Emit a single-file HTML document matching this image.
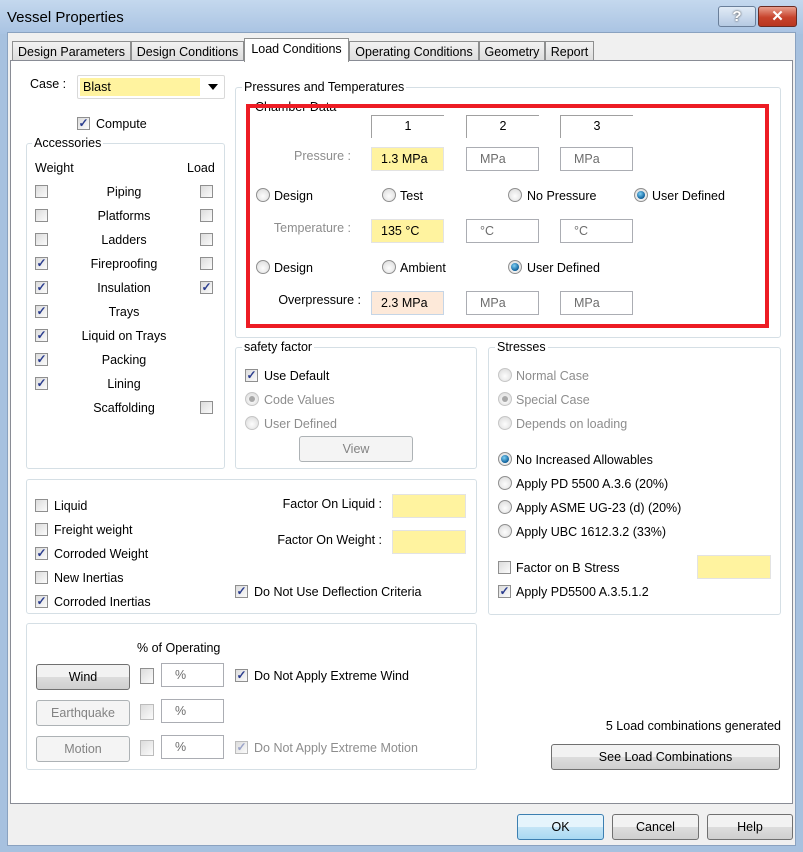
<!DOCTYPE html>
<html><head><meta charset="utf-8">
<style>
*{box-sizing:border-box;margin:0;padding:0}
body{width:803px;height:852px;position:relative;overflow:hidden;font-family:"Liberation Sans",sans-serif;font-size:12.5px;color:#000;background:#a7c1df}
.a{position:absolute;white-space:nowrap}
.title{left:0;top:0;width:803px;height:34px;background:linear-gradient(#c4d8ee,#a9c3e2)}
.gray{left:7px;top:32px;width:789px;height:814px;background:#f0f0f0;border:1px solid #8aa2c0}
.tab{top:41px;height:20px;border:1px solid #8e8f8f;border-bottom:none;background:linear-gradient(#f2f2f2,#dcdcdc);text-align:center;line-height:20px;font-size:12.5px}
.panel{left:10px;top:60px;width:783px;height:744px;background:#fff;border:1px solid #898c95}
.grp{border:1px solid #d5dfe5;border-radius:3px}
.gl{background:#fff;padding:0 2px;}
.cb{width:13px;height:13px;border:1px solid #8f8f8f;background:linear-gradient(135deg,#dcdcdc,#fbfbfb);font-size:12px;line-height:11px;text-align:center;color:#2a3c8e;font-weight:bold}
.cb.d{border-color:#bcbcbc;color:#9aa3c8}
.rb{width:14px;height:14px;border-radius:50%;border:1px solid #8f8f8f;background:radial-gradient(circle at 50% 60%,#fdfdfd,#d8d8d8)}
.rb.on::after{content:"";position:absolute;left:2px;top:2px;width:8px;height:8px;border-radius:50%;background:radial-gradient(circle at 40% 35%,#7fd0f5,#0d5f9a 70%,#083c64)}
.rb.g::after{content:"";position:absolute;left:3px;top:3px;width:6px;height:6px;border-radius:50%;background:#a8a8a8}
.rb.d{border-color:#c6c6c6}
.tb{height:24px;border:1px solid #abadb3;background:#fff;line-height:22px;padding-left:9px;color:#6d6d6d}
.y{background:#fff39f;color:#000}
.btn{border:1px solid #707070;border-radius:3px;background:linear-gradient(#f2f2f2 50%,#dddddd 50%,#cfcfcf);text-align:center;line-height:25px}
.btn.d{border-color:#adb2b5;background:#f4f4f4;color:#838383}
.dis{color:#8d8d8d}
</style></head><body>
<div class="a title"></div>
<div class="a" style="left:7px;top:9px;font-size:15px;">Vessel Properties</div>
<div class="a" style="left:718px;top:6px;width:38px;height:21px;border:1px solid #6a7f9a;border-radius:3px;background:linear-gradient(#e1ebf6,#b5c9e2);text-align:center;font-weight:bold;color:#fff;font-size:15px;line-height:19px;text-shadow:0 0 2px #333">?</div>
<div class="a" style="left:758px;top:6px;width:39px;height:21px;border:1px solid #6b2b22;border-radius:3px;background:linear-gradient(#e9a08f,#c7432c 55%,#b9361f);text-align:center;font-weight:bold;color:#fff;font-size:15px;line-height:19px">✕</div>
<div class="a gray"></div>
<div class="a tab" style="left:12px;width:119px">Design Parameters</div>
<div class="a tab" style="left:131px;width:113px">Design Conditions</div>
<div class="a tab" style="left:349px;width:130px">Operating Conditions</div>
<div class="a tab" style="left:479px;width:66px">Geometry</div>
<div class="a tab" style="left:545px;width:49px">Report</div>
<div class="a panel"></div>
<div class="a tab" style="left:244px;top:38px;width:105px;height:24px;background:#fff;line-height:21px">Load Conditions</div>

<!-- case -->
<div class="a" style="left:30px;top:77px">Case :</div>
<div class="a" style="left:77px;top:75px;width:148px;height:24px;border:1px solid #d9d9d9;border-radius:2px"></div>
<div class="a y" style="left:80px;top:78px;width:120px;height:18px;padding-left:3px;line-height:18px">Blast</div>
<div class="a" style="left:208px;top:84px;width:0;height:0;border-left:5px solid transparent;border-right:5px solid transparent;border-top:6px solid #000"></div>
<div class="a cb" style="left:77px;top:117px">✓</div><div class="a" style="left:96px;top:117px">Compute</div>

<!-- accessories -->
<div class="a grp" style="left:26px;top:143px;width:199px;height:326px"></div>
<div class="a gl" style="left:32px;top:136px">Accessories</div>
<div class="a" style="left:35px;top:161px">Weight</div><div class="a" style="left:187px;top:161px">Load</div>
<div class="a cb" style="left:35px;top:185px"></div><div class="a" style="left:64px;width:120px;text-align:center;top:185px">Piping</div><div class="a cb" style="left:200px;top:185px"></div>
<div class="a cb" style="left:35px;top:209px"></div><div class="a" style="left:64px;width:120px;text-align:center;top:209px">Platforms</div><div class="a cb" style="left:200px;top:209px"></div>
<div class="a cb" style="left:35px;top:233px"></div><div class="a" style="left:64px;width:120px;text-align:center;top:233px">Ladders</div><div class="a cb" style="left:200px;top:233px"></div>
<div class="a cb" style="left:35px;top:257px">✓</div><div class="a" style="left:64px;width:120px;text-align:center;top:257px">Fireproofing</div><div class="a cb" style="left:200px;top:257px"></div>
<div class="a cb" style="left:35px;top:281px">✓</div><div class="a" style="left:64px;width:120px;text-align:center;top:281px">Insulation</div><div class="a cb" style="left:200px;top:281px">✓</div>
<div class="a cb" style="left:35px;top:305px">✓</div><div class="a" style="left:64px;width:120px;text-align:center;top:305px">Trays</div>
<div class="a cb" style="left:35px;top:329px">✓</div><div class="a" style="left:64px;width:120px;text-align:center;top:329px">Liquid on Trays</div>
<div class="a cb" style="left:35px;top:353px">✓</div><div class="a" style="left:64px;width:120px;text-align:center;top:353px">Packing</div>
<div class="a cb" style="left:35px;top:377px">✓</div><div class="a" style="left:64px;width:120px;text-align:center;top:377px">Lining</div>
<div class="a" style="left:64px;width:120px;text-align:center;top:401px">Scaffolding</div><div class="a cb" style="left:200px;top:401px"></div>

<!-- pressures -->
<div class="a grp" style="left:235px;top:87px;width:546px;height:251px"></div>
<div class="a gl" style="left:242px;top:80px">Pressures and Temperatures</div>
<div class="a" style="left:255px;top:100px">Chamber Data</div>
<div class="a" style="left:246px;top:104px;width:523px;height:224px;border:4px solid #ed1c24"></div>
<div class="a" style="left:371px;top:115px;width:73px;height:23px;border-top:1px solid #a0a0a0;border-left:1px solid #a0a0a0;text-align:center;line-height:20px">1</div>
<div class="a" style="left:466px;top:115px;width:73px;height:23px;border-top:1px solid #a0a0a0;border-left:1px solid #a0a0a0;text-align:center;line-height:20px">2</div>
<div class="a" style="left:560px;top:115px;width:73px;height:23px;border-top:1px solid #a0a0a0;border-left:1px solid #a0a0a0;text-align:center;line-height:20px">3</div>
<div class="a dis" style="left:251px;width:100px;text-align:right;top:149px">Pressure :</div>
<div class="a tb y" style="left:371px;top:147px;width:73px;border-color:#e3e3e3">1.3 MPa</div>
<div class="a tb" style="left:466px;top:147px;width:73px;padding-left:13px">MPa</div>
<div class="a tb" style="left:560px;top:147px;width:73px;padding-left:13px">MPa</div>
<div class="a rb" style="left:256px;top:188px"></div><div class="a" style="left:274px;top:189px">Design</div>
<div class="a rb" style="left:382px;top:188px"></div><div class="a" style="left:400px;top:189px">Test</div>
<div class="a rb" style="left:508px;top:188px"></div><div class="a" style="left:527px;top:189px">No Pressure</div>
<div class="a rb on" style="left:634px;top:188px"></div><div class="a" style="left:652px;top:189px">User Defined</div>
<div class="a dis" style="left:251px;width:100px;text-align:right;top:221px">Temperature :</div>
<div class="a tb y" style="left:371px;top:219px;width:73px;border-color:#e3e3e3">135 °C</div>
<div class="a tb" style="left:466px;top:219px;width:73px;padding-left:13px">°C</div>
<div class="a tb" style="left:560px;top:219px;width:73px;padding-left:13px">°C</div>
<div class="a rb" style="left:256px;top:260px"></div><div class="a" style="left:274px;top:261px">Design</div>
<div class="a rb" style="left:382px;top:260px"></div><div class="a" style="left:400px;top:261px">Ambient</div>
<div class="a rb on" style="left:508px;top:260px"></div><div class="a" style="left:527px;top:261px">User Defined</div>
<div class="a" style="left:251px;width:110px;text-align:right;top:293px">Overpressure :</div>
<div class="a tb" style="left:371px;top:291px;width:73px;background:#fde9d9;color:#000;border-color:#c5d5e6">2.3 MPa</div>
<div class="a tb" style="left:466px;top:291px;width:73px;padding-left:13px">MPa</div>
<div class="a tb" style="left:560px;top:291px;width:73px;padding-left:13px">MPa</div>

<!-- safety factor -->
<div class="a grp" style="left:235px;top:347px;width:242px;height:122px"></div>
<div class="a gl" style="left:242px;top:340px">safety factor</div>
<div class="a cb" style="left:245px;top:369px">✓</div><div class="a" style="left:264px;top:369px">Use Default</div>
<div class="a rb d g" style="left:245px;top:392px"></div><div class="a dis" style="left:264px;top:393px">Code Values</div>
<div class="a rb d" style="left:245px;top:416px"></div><div class="a dis" style="left:264px;top:417px">User Defined</div>
<div class="a btn d" style="left:299px;top:436px;width:114px;height:26px">View</div>

<!-- stresses -->
<div class="a grp" style="left:488px;top:347px;width:293px;height:268px"></div>
<div class="a gl" style="left:495px;top:340px">Stresses</div>
<div class="a rb d" style="left:498px;top:368px"></div><div class="a dis" style="left:516px;top:369px">Normal Case</div>
<div class="a rb d g" style="left:498px;top:392px"></div><div class="a dis" style="left:516px;top:393px">Special Case</div>
<div class="a rb d" style="left:498px;top:416px"></div><div class="a dis" style="left:516px;top:417px">Depends on loading</div>
<div class="a rb on" style="left:498px;top:452px"></div><div class="a" style="left:516px;top:453px">No Increased Allowables</div>
<div class="a rb" style="left:498px;top:476px"></div><div class="a" style="left:516px;top:477px">Apply PD 5500 A.3.6 (20%)</div>
<div class="a rb" style="left:498px;top:500px"></div><div class="a" style="left:516px;top:501px">Apply ASME UG-23 (d) (20%)</div>
<div class="a rb" style="left:498px;top:524px"></div><div class="a" style="left:516px;top:525px">Apply UBC 1612.3.2 (33%)</div>
<div class="a cb" style="left:498px;top:561px"></div><div class="a" style="left:516px;top:561px">Factor on B Stress</div>
<div class="a tb y" style="left:697px;top:555px;width:74px;border-color:#e3e3e3"></div>
<div class="a cb" style="left:498px;top:585px">✓</div><div class="a" style="left:516px;top:585px">Apply PD5500 A.3.5.1.2</div>

<!-- liquid group -->
<div class="a grp" style="left:26px;top:479px;width:451px;height:135px"></div>
<div class="a cb" style="left:35px;top:499px"></div><div class="a" style="left:54px;top:499px">Liquid</div>
<div class="a cb" style="left:35px;top:523px"></div><div class="a" style="left:54px;top:523px">Freight weight</div>
<div class="a cb" style="left:35px;top:547px">✓</div><div class="a" style="left:54px;top:547px">Corroded Weight</div>
<div class="a cb" style="left:35px;top:571px"></div><div class="a" style="left:54px;top:571px">New Inertias</div>
<div class="a cb" style="left:35px;top:595px">✓</div><div class="a" style="left:54px;top:595px">Corroded Inertias</div>
<div class="a" style="left:240px;width:142px;text-align:right;top:497px">Factor On Liquid :</div>
<div class="a tb y" style="left:392px;top:494px;width:74px;border-color:#e3e3e3"></div>
<div class="a" style="left:240px;width:142px;text-align:right;top:533px">Factor On Weight :</div>
<div class="a tb y" style="left:392px;top:530px;width:74px;border-color:#e3e3e3"></div>
<div class="a cb" style="left:235px;top:585px">✓</div><div class="a" style="left:254px;top:585px">Do Not Use Deflection Criteria</div>

<!-- wind group -->
<div class="a grp" style="left:26px;top:623px;width:451px;height:147px"></div>
<div class="a" style="left:137px;top:641px">% of Operating</div>
<div class="a btn" style="left:36px;top:664px;width:94px;height:26px">Wind</div>
<div class="a cb" style="left:140px;top:668px;width:14px;height:16px"></div>
<div class="a tb" style="left:161px;top:663px;width:63px;height:24px;padding-left:13px">%</div>
<div class="a cb" style="left:235px;top:669px">✓</div><div class="a" style="left:254px;top:669px">Do Not Apply Extreme Wind</div>
<div class="a btn d" style="left:36px;top:700px;width:94px;height:26px">Earthquake</div>
<div class="a cb d" style="left:140px;top:704px;width:14px;height:16px"></div>
<div class="a tb" style="left:161px;top:699px;width:63px;height:24px;padding-left:13px">%</div>
<div class="a btn d" style="left:36px;top:736px;width:94px;height:26px">Motion</div>
<div class="a cb d" style="left:140px;top:740px;width:14px;height:16px"></div>
<div class="a tb" style="left:161px;top:735px;width:63px;height:24px;padding-left:13px">%</div>
<div class="a cb d" style="left:235px;top:741px">✓</div><div class="a dis" style="left:254px;top:741px">Do Not Apply Extreme Motion</div>

<div class="a" style="left:560px;width:221px;text-align:right;top:719px">5 Load combinations generated</div>
<div class="a btn" style="left:551px;top:744px;width:229px;height:26px">See Load Combinations</div>

<div class="a btn" style="left:517px;top:814px;width:87px;height:26px;border-color:#3c7fb1;background:linear-gradient(#e5f4fc 50%,#c4e5f6 50%,#a9d9f2)">OK</div>
<div class="a btn" style="left:612px;top:814px;width:87px;height:26px">Cancel</div>
<div class="a btn" style="left:707px;top:814px;width:86px;height:26px">Help</div>
</body></html>
